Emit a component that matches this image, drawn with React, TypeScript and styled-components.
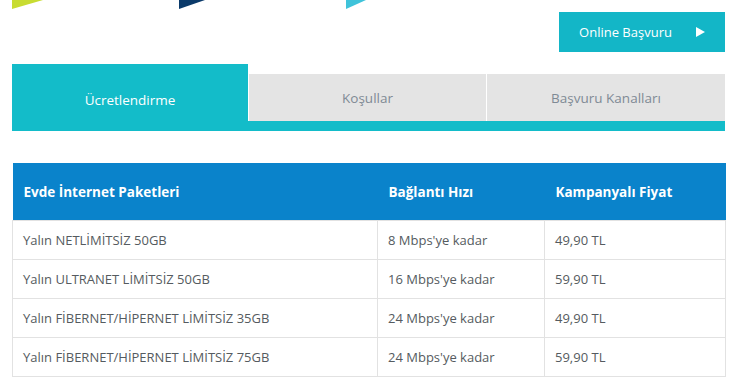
import React from 'react';
import styled, { createGlobalStyle } from 'styled-components';

const GlobalStyle = createGlobalStyle`
    body {
        margin: 0;
        background: #ffffff;
        font-family: "Open Sans", "Liberation Sans", sans-serif;
    }
`

const Page = styled.div`
    width: 713px;
    padding-left: 12px;
`

const Decor = styled.div`
    display: flex;
    height: 9px;
`

const Flag = styled.svg<{ $offset: number }>`
    display: block;
    margin-left: ${p => p.$offset}px;
`

const ButtonRow = styled.div`
    display: flex;
    justify-content: flex-end;
    padding-top: 3px;
`

const OnlineButton = styled.button`
    width: 166px;
    height: 40px;
    border: 0;
    background: #13b6c7;
    color: #fff;
    font-family: "Open Sans", "Liberation Sans", sans-serif;
    font-size: 13px;
    display: flex;
    align-items: center;
    justify-content: center;
    gap: 24px;
    padding: 0;
    cursor: pointer;
`

const Tabs = styled.div`
    margin-top: 12px;
    display: flex;
    align-items: flex-start;
    background: linear-gradient(to top, #13bcc9 10px, transparent 10px);
    height: 67px;
`

const Tab = styled.div<{ $active?: boolean; $width: number }>`
    width: ${p => p.$width}px;
    height: ${p => (p.$active ? 67 : 47)}px;
    margin-top: ${p => (p.$active ? 0 : 10)}px;
    background: ${p => (p.$active ? '#13bcc9' : '#e4e4e4')};
    color: ${p => (p.$active ? '#ffffff' : '#7f8a95')};
    font-size: 13.5px;
    display: flex;
    align-items: center;
    justify-content: center;
    box-sizing: border-box;
    padding-top: ${p => (p.$active ? 5 : 0)}px;
    & + & {
        border-left: ${p => (p.$active ? 0 : 1)}px solid #ffffff;
    }
`

const Table = styled.table`
    margin-top: 32px;
    width: 713px;
    border-collapse: collapse;
    table-layout: fixed;
    font-size: 13px;
`

const HeadCell = styled.th`
    background: #0a83cb;
    color: #ffffff;
    font-weight: 700;
    font-size: 13.5px;
    text-align: left;
    height: 57px;
    padding: 0 0 0 11px;
    border: 0;
`

const Cell = styled.td`
    height: 38px;
    padding: 0 0 0 10px;
    color: #555b60;
    border: 1px solid #e2e2e2;
`

const rows = [
    ['Yalın NETLİMİTSİZ 50GB', "8 Mbps'ye kadar", '49,90 TL'],
    ['Yalın ULTRANET LİMİTSİZ 50GB', "16 Mbps'ye kadar", '59,90 TL'],
    ['Yalın FİBERNET/HİPERNET LİMİTSİZ 35GB', "24 Mbps'ye kadar", '49,90 TL'],
    ['Yalın FİBERNET/HİPERNET LİMİTSİZ 75GB', "24 Mbps'ye kadar", '59,90 TL'],
];

const App: React.FC = () => {
    return (
        <Page>
            <GlobalStyle />
            <Decor>
                <Flag $offset={0} width="31" height="9" viewBox="0 0 31 9">
                    <polygon points="0,0 31,0 0,9" fill="#c8dc32" />
                </Flag>
                <Flag $offset={136} width="26" height="9" viewBox="0 0 26 9">
                    <polygon points="0,0 26,0 0,9" fill="#0b3a6a" />
                </Flag>
                <Flag $offset={141} width="20" height="9" viewBox="0 0 20 9">
                    <polygon points="0,0 20,0 0,9" fill="#3fc3da" />
                </Flag>
            </Decor>
            <ButtonRow>
                <OnlineButton>
                    Online Başvuru
                    <svg width="9" height="10" viewBox="0 0 9 10">
                        <polygon points="0,0 9,5 0,10" fill="#ffffff" />
                    </svg>
                </OnlineButton>
            </ButtonRow>
            <Tabs>
                <Tab $active $width={236}>Ücretlendirme</Tab>
                <Tab $width={238}>Koşullar</Tab>
                <Tab $width={239}>Başvuru Kanalları</Tab>
            </Tabs>
            <Table>
                <colgroup>
                    <col style={{ width: 365 }} />
                    <col style={{ width: 167 }} />
                    <col style={{ width: 181 }} />
                </colgroup>
                <thead>
                    <tr>
                        <HeadCell>Evde İnternet Paketleri</HeadCell>
                        <HeadCell>Bağlantı Hızı</HeadCell>
                        <HeadCell>Kampanyalı Fiyat</HeadCell>
                    </tr>
                </thead>
                <tbody>
                    {rows.map(r => (
                        <tr key={r[0]}>
                            {r.map((c, i) => <Cell key={i}>{c}</Cell>)}
                        </tr>
                    ))}
                </tbody>
            </Table>
        </Page>
    );
}

export default App
